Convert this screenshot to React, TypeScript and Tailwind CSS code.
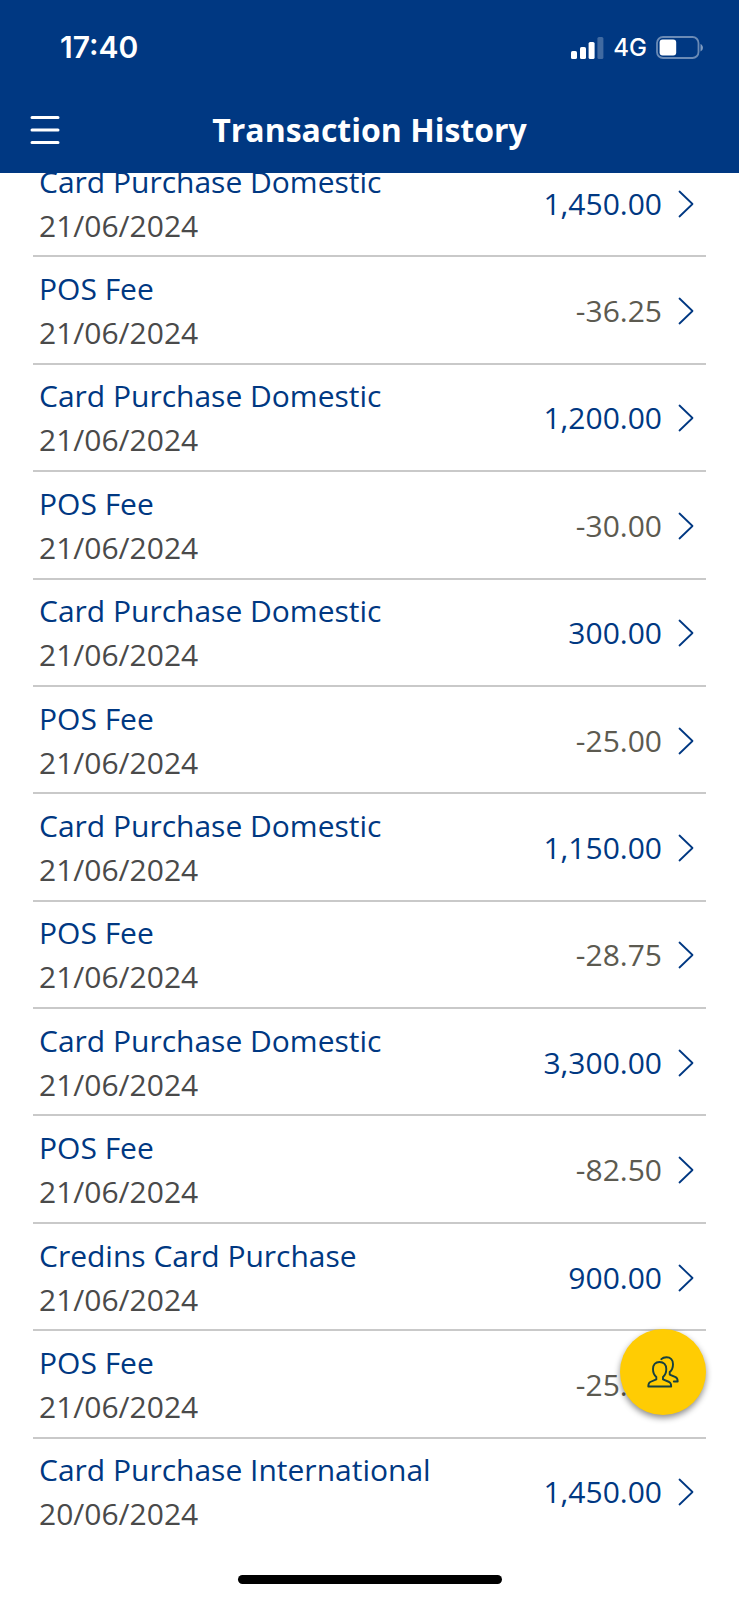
type Transaction = {
  title: string;
  date: string;
  amount: string;
};

const transactions: Transaction[] = [
  { title: "Card Purchase Domestic", date: "21/06/2024", amount: "1,450.00" },
  { title: "POS Fee", date: "21/06/2024", amount: "-36.25" },
  { title: "Card Purchase Domestic", date: "21/06/2024", amount: "1,200.00" },
  { title: "POS Fee", date: "21/06/2024", amount: "-30.00" },
  { title: "Card Purchase Domestic", date: "21/06/2024", amount: "300.00" },
  { title: "POS Fee", date: "21/06/2024", amount: "-25.00" },
  { title: "Card Purchase Domestic", date: "21/06/2024", amount: "1,150.00" },
  { title: "POS Fee", date: "21/06/2024", amount: "-28.75" },
  { title: "Card Purchase Domestic", date: "21/06/2024", amount: "3,300.00" },
  { title: "POS Fee", date: "21/06/2024", amount: "-82.50" },
  { title: "Credins Card Purchase", date: "21/06/2024", amount: "900.00" },
  { title: "POS Fee", date: "21/06/2024", amount: "-25.00" },
  { title: "Card Purchase International", date: "20/06/2024", amount: "1,450.00" },
];

function SignalIcon() {
  return (
    <svg width="33" height="22" viewBox="0 0 33 22" fill="#fff" aria-hidden="true">
      <rect x="0" y="14" width="6" height="8" rx="1.6" />
      <rect x="9" y="10" width="6" height="12" rx="1.6" />
      <rect x="17.6" y="5" width="6" height="17" rx="1.6" />
      <rect x="26.4" y="0" width="6" height="22" rx="1.6" opacity="0.25" />
    </svg>
  );
}

function BatteryIcon() {
  return (
    <svg width="48" height="23" viewBox="0 0 48 23" fill="none" aria-hidden="true">
      <rect x="1" y="1" width="41.5" height="21" rx="6" stroke="#fff" strokeOpacity="0.42" strokeWidth="1.8" />
      <rect x="3.6" y="3.6" width="16.6" height="15.8" rx="3" fill="#fff" />
      <path d="M44.5 8v7.4c1.4-.6 2.4-2 2.4-3.7s-1-3.1-2.4-3.7z" fill="#fff" fillOpacity="0.5" />
    </svg>
  );
}

function MenuIcon() {
  return (
    <svg width="30" height="30" viewBox="0 0 30 30" stroke="#fff" strokeWidth="3" strokeLinecap="round" aria-hidden="true">
      <path d="M2 2.500h26M2 15h26M2 27.500h26" />
    </svg>
  );
}

function ChevronIcon() {
  return (
    <svg width="16" height="28" viewBox="0 0 16 28" fill="none" stroke="#003882" strokeWidth="1.8" strokeLinecap="round" strokeLinejoin="round" aria-hidden="true">
      <path d="M1.500 1.500 14.500 14 1.500 26.500" />
    </svg>
  );
}

function PeopleIcon() {
  return (
    <svg width="32" height="32" viewBox="0 0 32 32" fill="none" stroke="#16403f" strokeWidth="1.9" strokeLinecap="round" strokeLinejoin="round" aria-hidden="true">
      <path d="M12.500 6C8.400 6 6 9 6 13c0 3.300 1.200 6.200 3.300 7.900v2.500L3.200 26C1.800 26.700 1.300 28 1.300 30.500h22.900c0-2.500-.6-3.800-2-4.500l-6.200-2.600v-2.500c2.100-1.700 3.300-4.600 3.300-7.900 0-4-2.500-7-6.800-7z" />
      <path d="M14.300 3.200C15.600 1.900 17.400 1.300 19.500 1.300c4.100 0 6.500 2.900 6.500 6.900 0 3.400-1.200 6.200-3.300 7.900v2.500l5.900 2.600c1.400.7 2.100 2 2.100 4.300h-3.900" />
    </svg>
  );
}

function TransactionRow({ title, date, amount }: Transaction) {
  const isFee = amount.startsWith("-");
  return (
    <li className="border-b-2 border-[#c9c9c9] last:border-transparent">
      <button type="button" className="flex h-full w-full items-center pl-1.5 pr-3 pt-0.5 text-left text-[30px] leading-[44px]">
        <span className="flex flex-1 flex-col">
          <span className="text-[#003882]">{title}</span>
          <span className="text-[#4a4a4a]">{date}</span>
        </span>
        <span className={isFee ? "text-[#5c5a50]" : "text-[#003882]"}>{amount}</span>
        <span className="ml-4">
          <ChevronIcon />
        </span>
      </button>
    </li>
  );
}

export default function App() {
  return (
    <div className="relative flex min-h-screen flex-col bg-white font-['Open_Sans',sans-serif]">
      <header className="relative z-10 bg-[#003882] text-white">
        <div className="flex h-[95px] items-center justify-between pl-[60px] pr-[35px] font-['Inter',sans-serif]">
          <span className="text-[30px] font-semibold">17:40</span>
          <div className="flex items-center gap-[9px]">
            <SignalIcon />
            <span className="text-[24px] font-medium">4G</span>
            <BatteryIcon />
          </div>
        </div>
        <div className="grid h-[78px] grid-cols-[30px_1fr_30px] items-center px-[30px] pb-2">
          <button type="button" aria-label="Menu">
            <MenuIcon />
          </button>
          <h1 className="text-center text-[32px] font-bold">Transaction History</h1>
        </div>
      </header>

      <ul className="-mt-[23px] grid flex-1 auto-rows-fr px-[33px]">
        {transactions.map((transaction, index) => (
          <TransactionRow key={index} {...transaction} />
        ))}
      </ul>

      <footer className="flex h-[54px] items-end justify-center pb-4">
        <div className="h-[9px] w-[264px] rounded-full bg-black" />
      </footer>

      <button
        type="button"
        aria-label="Contacts"
        className="absolute bottom-[185px] right-[33px] z-20 flex size-[86px] items-center justify-center rounded-full bg-[#ffcc03] shadow-[0_3px_6px_rgba(0,0,0,0.45)]"
      >
        <PeopleIcon />
      </button>
    </div>
  );
}
